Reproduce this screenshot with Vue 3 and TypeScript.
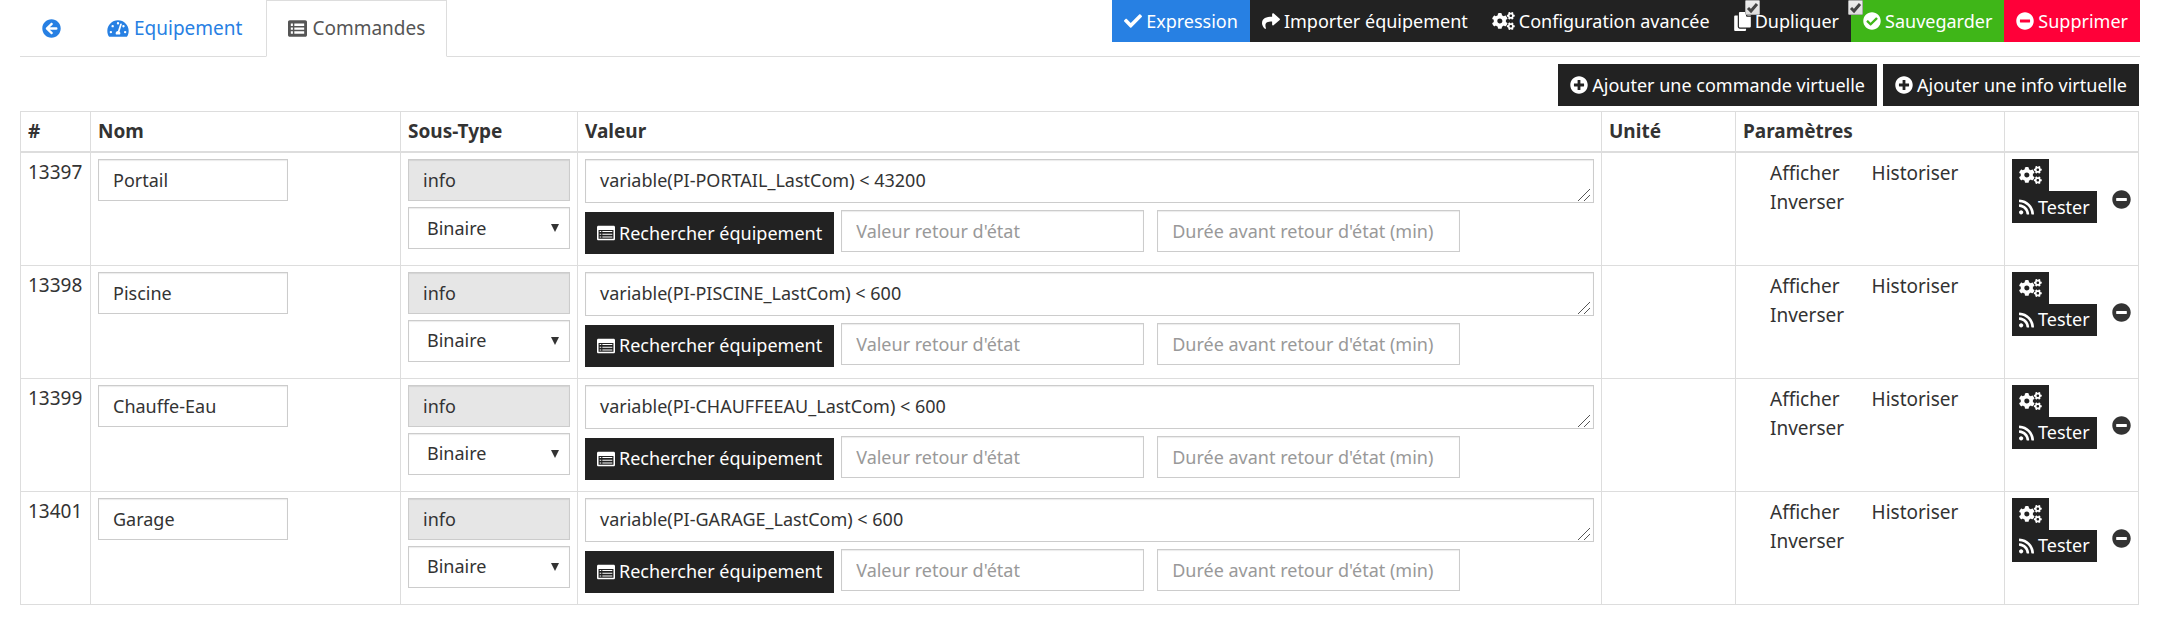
<script setup lang="ts">
import { ref } from 'vue'

interface Command { id: number; name: string; value: string }

const icons: Record<string, { w: number; d: string }> = {
  back: { w: 512, d: 'M256 504C119 504 8 393 8 256S119 8 256 8s248 111 248 248-111 248-248 248zm28.9-143.6L209.4 288H392c13.3 0 24-10.7 24-24v-16c0-13.3-10.7-24-24-24H209.4l75.5-72.4c9.7-9.3 9.9-24.8.4-34.3l-11-10.9c-9.4-9.4-24.6-9.4-33.9 0L107.7 239c-9.4 9.4-9.4 24.6 0 33.9l132.7 132.7c9.4 9.4 24.6 9.4 33.9 0l11-10.9c9.5-9.5 9.3-25-.4-34.3z' },
  gauge: { w: 576, d: 'M288 32C129 32 0 161 0 320c0 53 14 102 39 145 6 9 16 15 27 15h444c11 0 21-6 27-15 25-43 39-92 39-145C576 161 447 32 288 32zM288 82a32 32 0 1 1 0 64 32 32 0 0 1 0-64zM96 384a32 32 0 1 1 0-64 32 32 0 0 1 0 64zm48-160a32 32 0 1 1 0-64 32 32 0 0 1 0 64zm246-73l-61 184c14 12 23 29 23 49 0 12-3 22-9 32H233c-5-10-9-20-9-32 0-34 27-62 61-64l61-184c11-29 54-15 44 15zm15 52a32 32 0 1 1 42 20 32 32 0 0 1-42-20zM480 384a32 32 0 1 1 0-64 32 32 0 0 1 0 64z' },
  list: { w: 512, d: 'M464 32H48C21 32 0 53 0 80v352c0 27 21 48 48 48h416c27 0 48-21 48-48V80c0-27-21-48-48-48zM76 120h56v66H76zM170 120h266v66H170zM76 226h56v66H76zM170 226h266v66H170zM76 332h56v66H76zM170 332h266v66H170z' },
  listAlt: { w: 512, d: 'M40 48h432c22 0 40 18 40 40v336c0 22-18 40-40 40H40c-22 0-40-18-40-40V88c0-22 18-40 40-40zM44 168v252h424V168zM76 196h44v34H76zM152 196h284v34H152zM76 274h44v34H76zM152 274h284v34H152zM76 352h44v34H76zM152 352h284v34H152z' },
  check: { w: 512, d: 'M173.898 439.404l-166.4-166.4c-9.997-9.997-9.997-26.206 0-36.204l36.203-36.204c9.997-9.998 26.207-9.998 36.204 0L192 312.69 432.095 72.596c9.997-9.997 26.207-9.997 36.204 0l36.203 36.204c9.997 9.997 9.997 26.206 0 36.204l-294.4 294.401c-9.998 9.997-26.207 9.997-36.204-.001z' },
  share: { w: 512, d: 'M503.691 189.836L327.687 37.851C312.281 24.546 288 35.347 288 56.015v80.053C127.371 137.907 0 170.1 0 322.326c0 61.441 39.581 122.309 83.333 154.132 13.653 9.931 33.111-2.533 28.077-18.631C66.066 312.814 132.917 274.316 288 272.085V360c0 20.7 24.3 31.453 39.687 18.164l176.004-152c11.071-9.562 11.086-26.753 0-36.328z' },
  cogs: { w: 640, d: 'M512.1 191l-8.2 14.3c-3 5.3-9.4 7.5-15.1 5.4-11.8-4.4-22.6-10.7-32.1-18.6-4.6-3.8-5.8-10.5-2.8-15.7l8.2-14.3c-6.9-8-12.3-17.3-15.9-27.4h-16.5c-6 0-11.2-4.3-12.2-10.3-2-12-2.1-24.6 0-37.1 1-6 6.2-10.4 12.2-10.4h16.5c3.6-10.1 9-19.4 15.9-27.4l-8.2-14.3c-3-5.2-1.9-11.9 2.8-15.7 9.5-7.9 20.4-14.2 32.1-18.6 5.7-2.1 12.1.1 15.1 5.4l8.2 14.3c10.5-1.9 21.2-1.9 31.7 0L552 6.3c3-5.3 9.4-7.5 15.1-5.4 11.8 4.4 22.6 10.7 32.1 18.6 4.6 3.8 5.8 10.5 2.8 15.7l-8.2 14.3c6.9 8 12.3 17.3 15.9 27.4h16.5c6 0 11.2 4.3 12.2 10.3 2 12 2.1 24.6 0 37.1-1 6-6.2 10.4-12.2 10.4h-16.5c-3.6 10.1-9 19.4-15.9 27.4l8.2 14.3c3 5.2 1.9 11.9-2.8 15.7-9.5 7.9-20.4 14.2-32.1 18.6-5.7 2.1-12.1-.1-15.1-5.4l-8.2-14.3c-10.4 1.9-21.2 1.9-31.7 0zm-10.5-58.8c38.5 29.6 82.4-14.3 52.8-52.8-38.5-29.7-82.4 14.3-52.8 52.8zM386.3 286.1l33.7 16.8c10.1 5.8 14.5 18.1 10.5 29.1-8.9 24.2-26.4 46.4-42.6 65.8-7.4 8.9-20.2 11.1-30.3 5.3l-29.1-16.8c-16 13.7-34.6 24.6-54.9 31.7v33.6c0 11.6-8.3 21.6-19.7 23.6-24.6 4.2-50.4 4.4-75.9 0-11.5-2-20-11.9-20-23.6V418c-20.3-7.2-38.9-18-54.9-31.7L74 403c-10 5.8-22.9 3.6-30.3-5.3-16.2-19.4-33.3-41.6-42.2-65.7-4-10.9.4-23.2 10.5-29.1l33.3-16.8c-3.9-20.9-3.9-42.4 0-63.4L12 205.8c-10.1-5.8-14.6-18.1-10.5-29 8.9-24.2 26-46.4 42.2-65.8 7.4-8.9 20.2-11.1 30.3-5.3l29.1 16.8c16-13.7 34.6-24.6 54.9-31.7V57.1c0-11.5 8.2-21.5 19.6-23.5 24.6-4.2 50.5-4.4 76-.1 11.5 2 20 11.9 20 23.6v33.6c20.3 7.2 38.9 18 54.9 31.7l29.1-16.8c10-5.8 22.9-3.6 30.3 5.3 16.2 19.4 33.2 41.6 42.1 65.8 4 10.9.1 23.2-10 29.1l-33.7 16.8c3.9 21 3.9 42.5 0 63.5zm-117.6 21.1c59.2-77-28.7-164.9-105.7-105.7-59.2 77 28.7 164.9 105.7 105.7zm243.4 182.7l-8.2 14.3c-3 5.3-9.4 7.5-15.1 5.4-11.8-4.4-22.6-10.7-32.1-18.6-4.6-3.8-5.8-10.5-2.8-15.7l8.2-14.3c-6.9-8-12.3-17.3-15.9-27.4h-16.5c-6 0-11.2-4.3-12.2-10.3-2-12-2.1-24.6 0-37.1 1-6 6.2-10.4 12.2-10.4h16.5c3.6-10.1 9-19.4 15.9-27.4l-8.2-14.3c-3-5.2-1.9-11.9 2.8-15.7 9.5-7.9 20.4-14.2 32.1-18.6 5.7-2.1 12.1.1 15.1 5.4l8.2 14.3c10.5-1.9 21.2-1.9 31.7 0l8.2-14.3c3-5.3 9.4-7.5 15.1-5.4 11.8 4.4 22.6 10.7 32.1 18.6 4.6 3.8 5.8 10.5 2.8 15.7l-8.2 14.3c6.9 8 12.3 17.3 15.9 27.4h16.5c6 0 11.2 4.3 12.2 10.3 2 12 2.1 24.6 0 37.1-1 6-6.2 10.4-12.2 10.4h-16.5c-3.6 10.1-9 19.4-15.9 27.4l8.2 14.3c3 5.2 1.9 11.9-2.8 15.7-9.5 7.9-20.4 14.2-32.1 18.6-5.7 2.1-12.1-.1-15.1-5.4l-8.2-14.3c-10.4 1.9-21.2 1.9-31.7 0zM501.6 431c38.5 29.6 82.4-14.3 52.8-52.8-38.5-29.6-82.4 14.3-52.8 52.8z' },
  copy: { w: 448, d: 'M320 448v40c0 13.255-10.745 24-24 24H24c-13.255 0-24-10.745-24-24V120c0-13.255 10.745-24 24-24h72v296c0 30.879 25.121 56 56 56h168zm0-344V0H152c-13.255 0-24 10.745-24 24v368c0 13.255 10.745 24 24 24h272c13.255 0 24-10.745 24-24V128H344c-13.2 0-24-10.8-24-24zm120.971-31.029L375.029 7.029A24 24 0 0 0 358.059 0H352v96h96v-6.059a24 24 0 0 0-7.029-16.97z' },
  checkCircle: { w: 512, d: 'M504 256c0 136.967-111.033 248-248 248S8 392.967 8 256 119.033 8 256 8s248 111.033 248 248zM227.314 387.314l184-184c6.248-6.248 6.248-16.379 0-22.627l-22.627-22.627c-6.248-6.249-16.379-6.249-22.628 0L216 308.118l-70.059-70.059c-6.248-6.248-16.379-6.248-22.628 0l-22.627 22.627c-6.248 6.248-6.248 16.379 0 22.627l104 104c6.249 6.249 16.379 6.249 22.628.001z' },
  minus: { w: 512, d: 'M256 8C119 8 8 119 8 256s111 248 248 248 248-111 248-248S393 8 256 8zM124 296c-6.6 0-12-5.4-12-12v-56c0-6.6 5.4-12 12-12h264c6.6 0 12 5.4 12 12v56c0 6.6-5.4 12-12 12H124z' },
  plus: { w: 512, d: 'M256 8C119 8 8 119 8 256s111 248 248 248 248-111 248-248S393 8 256 8zm144 276c0 6.6-5.4 12-12 12h-92v92c0 6.6-5.4 12-12 12h-56c-6.6 0-12-5.4-12-12v-92h-92c-6.6 0-12-5.4-12-12v-56c0-6.6 5.4-12 12-12h92v-92c0-6.6 5.4-12 12-12h56c6.6 0 12 5.4 12 12v92h92c6.6 0 12 5.4 12 12v56z' },
  rss: { w: 448, d: 'M128.081 415.959c0 35.369-28.672 64.041-64.041 64.041S0 451.328 0 415.959s28.672-64.041 64.041-64.041 64.04 28.673 64.04 64.041zm175.66 47.25c-8.354-154.6-132.185-278.587-286.95-286.95C7.656 175.765 0 183.105 0 192.253v48.069c0 8.415 6.49 15.472 14.887 16.018 111.832 7.284 201.473 96.702 208.772 208.772.547 8.397 7.604 14.887 16.018 14.887h48.069c9.149.001 16.489-7.655 15.995-16.79zm144.249.288C439.596 229.677 251.465 40.445 16.503 32.01 7.473 31.686 0 38.981 0 48.016v48.068c0 8.625 6.835 15.645 15.453 15.999 191.179 7.839 344.627 161.316 352.465 352.465.353 8.618 7.373 15.453 15.999 15.453h48.068c9.034-.001 16.329-7.474 16.005-16.504z' },
}

const actions = [
  { label: 'Expression', icon: 'check', tone: 'blue' },
  { label: 'Importer équipement', icon: 'share', tone: 'dark' },
  { label: 'Configuration avancée', icon: 'cogs', tone: 'dark' },
  { label: 'Dupliquer', icon: 'copy', tone: 'dark', ticks: true },
  { label: 'Sauvegarder', icon: 'checkCircle', tone: 'green' },
  { label: 'Supprimer', icon: 'minus', tone: 'red' },
]

const ticks = ref([
  { label: 'Afficher', side: 'start', on: true },
  { label: 'Historiser', side: 'end', on: true },
])

const commands = ref<Command[]>([
  { id: 13397, name: 'Portail', value: 'variable(PI-PORTAIL_LastCom) < 43200' },
  { id: 13398, name: 'Piscine', value: 'variable(PI-PISCINE_LastCom) < 600' },
  { id: 13399, name: 'Chauffe-Eau', value: 'variable(PI-CHAUFFEEAU_LastCom) < 600' },
  { id: 13401, name: 'Garage', value: 'variable(PI-GARAGE_LastCom) < 600' },
])
</script>

<template>
  <main class="page">
    <header class="top">
      <nav class="tabs">
        <a class="tab" href="#" aria-label="Retour">
          <svg class="icon" viewBox="0 0 512 512"><path :d="icons.back.d" /></svg>
        </a>
        <a class="tab" href="#equipement">
          <svg class="icon gauge" viewBox="0 0 576 512"><path fill-rule="evenodd" :d="icons.gauge.d" /></svg>
          Equipement
        </a>
        <a class="tab active" href="#commandes">
          <svg class="icon" viewBox="0 0 512 512"><path fill-rule="evenodd" :d="icons.list.d" /></svg>
          Commandes
        </a>
      </nav>
      <div class="actions">
        <div v-for="a in actions" :key="a.label" class="action">
          <button type="button" class="btn" :class="a.tone">
            <svg class="icon" :class="a.icon" :viewBox="`0 0 ${icons[a.icon].w} 512`"><path :d="icons[a.icon].d" /></svg>
            {{ a.label }}
          </button>
          <template v-if="a.ticks">
            <label v-for="t in ticks" :key="t.label" class="tick" :class="t.side">
              <input v-model="t.on" type="checkbox" :aria-label="t.label" />
              <svg v-if="t.on" viewBox="0 0 15 15"><path d="M3 8l3 3 6-7" /></svg>
            </label>
          </template>
        </div>
      </div>
    </header>

    <div class="adders">
      <button type="button" class="btn dark">
        <svg class="icon" viewBox="0 0 512 512"><path :d="icons.plus.d" /></svg>
        Ajouter une commande virtuelle
      </button>
      <button type="button" class="btn dark">
        <svg class="icon" viewBox="0 0 512 512"><path :d="icons.plus.d" /></svg>
        Ajouter une info virtuelle
      </button>
    </div>

    <div class="grid-wrap">
      <table class="grid">
        <colgroup>
          <col class="c-id" /><col class="c-name" /><col class="c-type" /><col class="c-value" />
          <col class="c-unit" /><col class="c-params" /><col class="c-tools" />
        </colgroup>
        <thead>
          <tr>
            <th>#</th><th>Nom</th><th>Sous-Type</th><th>Valeur</th><th>Unité</th><th>Paramètres</th><th></th>
          </tr>
        </thead>
        <tbody>
          <tr v-for="c in commands" :key="c.id">
            <td>{{ c.id }}</td>
            <td><input v-model="c.name" class="field name" type="text" aria-label="Nom" /></td>
            <td>
              <div class="stack">
                <input class="field" type="text" value="info" disabled aria-label="Type" />
                <div class="pick">
                  <select class="field" aria-label="Sous-Type">
                    <option>Binaire</option>
                  </select>
                  <svg class="caret" viewBox="0 0 8 8"><path d="M0 0h8L4 8z" /></svg>
                </div>
              </div>
            </td>
            <td>
              <div class="stack value">
                <div class="formula-box">
                  <textarea v-model="c.value" class="field formula" rows="1" aria-label="Valeur"></textarea>
                  <svg class="grip" viewBox="0 0 12 12"><path d="M0 12L12 0M6 12l6-6" /></svg>
                </div>
                <div class="tools">
                  <button type="button" class="btn dark search">
                    <svg class="icon" viewBox="0 0 512 512"><path fill-rule="evenodd" :d="icons.listAlt.d" /></svg>
                    Rechercher équipement
                  </button>
                  <div class="returns">
                    <input class="field" type="text" placeholder="Valeur retour d'état" aria-label="Valeur retour d'état" />
                    <input class="field" type="text" placeholder="Durée avant retour d'état (min)" aria-label="Durée avant retour d'état (min)" />
                  </div>
                </div>
              </div>
            </td>
            <td></td>
            <td>
              <div class="params"><span>Afficher</span><span>Historiser</span><span>Inverser</span></div>
            </td>
            <td>
              <div class="ops">
                <div class="ops-main">
                  <button type="button" class="btn dark small" aria-label="Configurer">
                    <svg class="icon cogs" viewBox="0 0 640 512"><path :d="icons.cogs.d" /></svg>
                  </button>
                  <button type="button" class="btn dark small">
                    <svg class="icon rss" viewBox="0 0 448 512"><path :d="icons.rss.d" /></svg>
                    Tester
                  </button>
                </div>
                <button type="button" class="remove" aria-label="Supprimer">
                  <svg class="icon" viewBox="0 0 512 512"><path :d="icons.minus.d" /></svg>
                </button>
              </div>
            </td>
          </tr>
        </tbody>
      </table>
    </div>
  </main>
</template>

<style>
body {
  background: #fff;
}
</style>

<style scoped>
.page {
  padding: 0 20px;
  font-family: "Noto Sans", sans-serif;
  font-size: 19px;
  line-height: 27px;
  color: #333;
}
.page * {
  box-sizing: border-box;
}
.icon {
  flex: none;
  width: 18px;
  height: 18px;
  fill: currentColor;
}
.icon.cogs {
  width: 23px;
}
.icon.copy {
  width: 17px;
  height: 19px;
}
.icon.rss {
  width: 15px;
}
.top {
  display: flex;
  justify-content: space-between;
  align-items: flex-start;
  border-bottom: 1px solid #ddd;
}
.tabs {
  display: flex;
  gap: 2px;
  margin-bottom: -1px;
}
.tab {
  display: flex;
  align-items: center;
  gap: 5px;
  height: 57px;
  padding: 0 21px;
  border: 1px solid transparent;
  color: #2780e3;
  text-decoration: none;
}
.tab .icon {
  width: 19px;
  height: 19px;
}
.tab .icon.gauge {
  width: 22px;
}
.tab.active {
  background: #fff;
  border-color: #ddd #ddd #fff;
  color: #555;
}
.actions {
  display: flex;
}
.action {
  position: relative;
}
.btn {
  display: flex;
  align-items: center;
  gap: 4px;
  height: 42px;
  padding: 0 12px;
  border: 0;
  color: #fff;
  font: inherit;
  font-size: 18px;
  white-space: nowrap;
}
.dark { background: #222; }
.blue { background: #2780e3; }
.green { background: #3fb618; }
.red { background: #ff0039; }
.tick {
  position: absolute;
  z-index: 1;
  top: 0;
  width: 15px;
  height: 15px;
}
.tick.start {
  left: 23px;
}
.tick.end {
  right: -12px;
}
.tick input {
  display: block;
  width: 15px;
  height: 15px;
  margin: 0;
  appearance: none;
  border: 1px solid #aaa;
  border-radius: 1px;
  background: linear-gradient(#eee, #ddd);
}
.tick svg {
  position: absolute;
  inset: 0;
  fill: none;
  stroke: #444;
  stroke-width: 3;
}
.adders {
  display: flex;
  justify-content: flex-end;
  gap: 6px;
  padding: 7px 1px 5px 0;
}
.grid-wrap {
  padding-right: 1px;
}
.grid {
  width: 100%;
  table-layout: fixed;
  border-collapse: collapse;
}
.c-id { width: 70px; }
.c-name { width: 310px; }
.c-type { width: 177px; }
.c-unit { width: 134px; }
.c-params { width: 269px; }
.c-tools { width: 134px; }
th,
td {
  padding: 6px 7px;
  border: 1px solid #ddd;
  text-align: left;
  vertical-align: top;
}
th {
  border-bottom-width: 2px;
}
td {
  height: 113px;
}
.field {
  display: block;
  width: 100%;
  height: 42px;
  padding: 0 14px;
  border: 1px solid #ccc;
  border-radius: 0;
  background: #fff;
  box-shadow: inset 0 1px 1px rgba(0, 0, 0, 0.08);
  color: #333;
  font: inherit;
  font-size: 18px;
}
.field::placeholder {
  color: #999;
}
.field:disabled {
  background: #e6e6e6;
}
.name {
  width: 190px;
}
.stack {
  display: flex;
  flex-direction: column;
  gap: 6px;
}
.stack.value {
  gap: 7px;
}
.pick,
.formula-box {
  position: relative;
}
.pick .field {
  padding: 0 18px;
  appearance: none;
}
.caret {
  position: absolute;
  top: 17px;
  right: 11px;
  width: 8px;
  height: 8px;
  fill: #333;
  pointer-events: none;
}
.formula {
  height: 44px;
  padding: 7px 14px;
  overflow: hidden;
  resize: none;
}
.grip {
  position: absolute;
  right: 4px;
  bottom: 2px;
  width: 12px;
  height: 12px;
  stroke: #555;
  stroke-width: 1;
  pointer-events: none;
}
.tools {
  display: flex;
  align-items: flex-start;
  gap: 7px;
}
.search {
  margin-top: 2px;
}
.returns {
  display: flex;
  gap: 13px;
}
.returns .field {
  width: 303px;
}
.params {
  display: flex;
  flex-wrap: wrap;
  column-gap: 32px;
  padding-left: 27px;
  line-height: 29px;
}
.ops {
  display: flex;
  justify-content: space-between;
  align-items: flex-end;
}
.small {
  height: 32px;
  padding: 0 7px;
}
.remove {
  padding: 0;
  margin-bottom: 14px;
  border: 0;
  background: none;
  color: #333;
}
.remove .icon {
  display: block;
  width: 19px;
  height: 19px;
}
</style>
